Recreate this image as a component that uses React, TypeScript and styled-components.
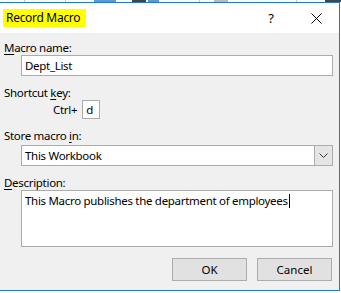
import React from "react";
import styled, { createGlobalStyle } from "styled-components";

const GlobalStyle = createGlobalStyle`
  html, body {
    margin: 0;
    padding: 0;
    background: #ffffff;
  }
  body {
    font-family: "Segoe UI", "Noto Sans", "Open Sans", sans-serif;
    font-size: 11.5px;
    letter-spacing: -0.3px;
    color: #000;
    overflow: hidden;
  }
`;

const Page = styled.div`
  width: 341px;
  height: 293px;
  display: flex;
  flex-direction: column;
`;

/* bits of the sheet peeking out above the dialog */
const SheetStrip = styled.div`
  height: 2px;
  display: flex;
  background: #fafafa;
`;

const SheetBit = styled.span<{ $w: number; $c: string; $gap: number }>`
  width: ${(p) => p.$w}px;
  margin-left: ${(p) => p.$gap}px;
  background: ${(p) => p.$c};
`;

const Dialog = styled.div`
  width: 339px;
  height: 287px;
  border: 1px solid #1e7bd4;
  border-left: none;
  display: flex;
  flex-direction: column;
  background: #f0f0f0;
`;

const TitleBar = styled.div`
  height: 30px;
  background: #fff;
  display: flex;
  align-items: center;
  padding-left: 3px;
`;

const Title = styled.span`
  background: #ffff00;
  height: 18px;
  line-height: 18px;
  padding: 0 6px 0 3px;
  font-size: 12px;
`;

const TitleButtons = styled.div`
  margin-left: auto;
  display: flex;
  align-items: center;
`;

const HelpGlyph = styled.span`
  font-size: 13px;
  width: 12px;
  text-align: center;
  margin-right: 34px;
`;

const CloseButton = styled.span`
  display: flex;
  margin-right: 17px;
`;

const Body = styled.div`
  flex: 1;
  display: flex;
  flex-direction: column;
  padding: 7px 6px 0 4px;
`;

const Label = styled.div<{ $top?: number }>`
  line-height: 15px;
  margin-top: ${(p) => p.$top ?? 0}px;
`;

const Key = styled.span`
  text-decoration: underline;
  text-underline-offset: 2px;
`;

const Field = styled.div<{ $h: number }>`
  margin-left: 17px;
  height: ${(p) => p.$h}px;
  box-sizing: border-box;
  border: 1px solid #acacac;
  background: #fff;
  display: flex;
  align-items: ${(p) => (p.$h > 30 ? "flex-start" : "center")};
  padding: ${(p) => (p.$h > 30 ? "2px 0 0 3px" : "0 0 0 3px")};
  white-space: nowrap;
`;

const Caret = styled.span`
  display: inline-block;
  width: 1px;
  height: 14px;
  background: #000;
  margin-left: 1px;
  vertical-align: -3px;
`;

const ShortcutRow = styled.div`
  display: flex;
  align-items: center;
  margin: 0 0 0 49px;
  gap: 5px;
`;

const KeyBox = styled.div`
  width: 18px;
  height: 19px;
  box-sizing: border-box;
  border: 1px solid #acacac;
  background: #fff;
  display: flex;
  align-items: center;
  padding-left: 3px;
`;

const Select = styled.div`
  margin: 2px 0 0 17px;
  height: 21px;
  box-sizing: border-box;
  border: 1px solid #acacac;
  background: #fff;
  display: flex;
  align-items: stretch;
`;

const SelectText = styled.span`
  flex: 1;
  display: flex;
  align-items: center;
  padding-left: 3px;
`;

const SelectArrow = styled.span`
  width: 17px;
  background: #e5e5e5;
  border-left: 1px solid #acacac;
  display: flex;
  align-items: center;
  justify-content: center;
`;

const Buttons = styled.div`
  display: flex;
  justify-content: flex-end;
  gap: 10px;
  margin-top: 11px;
  padding-right: 1px;
`;

const Button = styled.button`
  width: 75px;
  height: 23px;
  box-sizing: border-box;
  border: 1px solid #adadad;
  background: #e1e1e1;
  font: inherit;
  color: #000;
  padding: 0;
`;

export default function App() {
  return (
    <Page>
      <GlobalStyle />
      <SheetStrip>
        <SheetBit $gap={24} $w={1} $c="#c8c8c8" />
        <SheetBit $gap={40} $w={1} $c="#c8c8c8" />
        <SheetBit $gap={28} $w={22} $c="#5a9bd5" />
        <SheetBit $gap={16} $w={14} $c="#444" />
        <SheetBit $gap={2} $w={12} $c="#5a9bd5" />
        <SheetBit $gap={40} $w={1} $c="#c8c8c8" />
        <SheetBit $gap={14} $w={14} $c="#bbb" />
        <SheetBit $gap={68} $w={1} $c="#c8c8c8" />
        <SheetBit $gap={28} $w={16} $c="#444" />
      </SheetStrip>
      <Dialog>
        <TitleBar>
          <Title>Record Macro</Title>
          <TitleButtons>
            <HelpGlyph>?</HelpGlyph>
            <CloseButton>
              <svg width="11" height="11" viewBox="0 0 11 11">
                <path d="M0.5 0.5 L10.5 10.5 M10.5 0.5 L0.5 10.5" stroke="#000" strokeWidth="1" fill="none" />
              </svg>
            </CloseButton>
          </TitleButtons>
        </TitleBar>
        <Body>
          <Label>
            <Key>M</Key>acro name:
          </Label>
          <Field $h={21}>Dept_List</Field>
          <Label $top={9}>
            Shortcut <Key>k</Key>ey:
          </Label>
          <ShortcutRow>
            <span>Ctrl+</span>
            <KeyBox>d</KeyBox>
          </ShortcutRow>
          <Label $top={9}>
            Store macro <Key>i</Key>n:
          </Label>
          <Select>
            <SelectText>This Workbook</SelectText>
            <SelectArrow>
              <svg width="9" height="5" viewBox="0 0 9 5">
                <path d="M0.5 0.5 L4.5 4.5 L8.5 0.5" stroke="#333" strokeWidth="1" fill="none" />
              </svg>
            </SelectArrow>
          </Select>
          <Label $top={9}>
            <Key>D</Key>escription:
          </Label>
          <Field $h={57}>
            <span>
              This Macro publishes the department of employees
              <Caret />
            </span>
          </Field>
          <Buttons>
            <Button>OK</Button>
            <Button>Cancel</Button>
          </Buttons>
        </Body>
      </Dialog>
    </Page>
  );
}
